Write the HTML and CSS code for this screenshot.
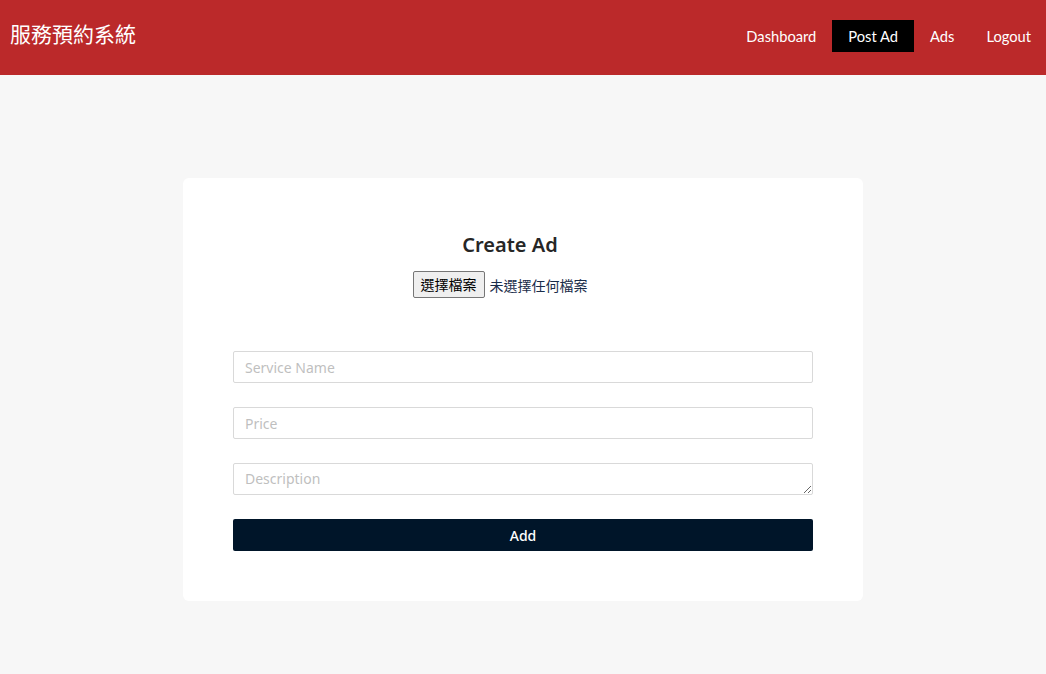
FILE: index.html
```html
<!DOCTYPE html>
<html lang="zh-Hant">
<head>
<meta charset="utf-8">
<title>服務預約系統</title>
<link rel="stylesheet" href="styles.css">
</head>
<body>
<header class="topbar">
  <div class="brand">服務預約系統</div>
  <nav class="nav">
    <a class="nav-item">Dashboard</a>
    <a class="nav-item active">Post Ad</a>
    <a class="nav-item">Ads</a>
    <a class="nav-item">Logout</a>
  </nav>
</header>
<main class="main">
  <section class="card">
    <div class="head">
      <h2 class="title">Create Ad</h2>
      <label class="file">
        <span class="file-btn">選擇檔案</span>
        <span class="file-name">未選擇任何檔案</span>
      </label>
    </div>
    <form class="form">
      <input class="field" type="text" placeholder="Service Name">
      <input class="field" type="text" placeholder="Price">
      <textarea class="field area" placeholder="Description"></textarea>
      <button class="submit" type="button">Add</button>
    </form>
  </section>
</main>
</body>
</html>
```
FILE: styles.css
```css
* { box-sizing: border-box; }
html, body { margin: 0; padding: 0; }
body {
  background: #f7f7f7;
  font-family: "Noto Sans", "Open Sans", "Noto Sans CJK TC", sans-serif;
  color: #262626;
  min-height: 674px;
}
.topbar {
  height: 75px;
  background: #bb292a;
  display: flex;
  align-items: flex-start;
  justify-content: space-between;
  padding: 0 0 0 10px;
}
.brand {
  color: #fff;
  font-family: "Noto Sans CJK TC", sans-serif;
  font-size: 21px;
  line-height: 24px;
  margin-top: 21px;
}
.nav {
  display: flex;
  margin-top: 20px;
  margin-right: -1px;
}
.nav-item {
  color: #fff;
  font-family: "Lato", sans-serif;
  font-size: 14.7px;
  height: 32px;
  line-height: 33px;
  padding: 0 16px;
  cursor: pointer;
}
.nav-item.active { background: #000; }
.main {
  display: flex;
  justify-content: center;
  padding-top: 103px;
}
.card {
  width: 680px;
  background: #fff;
  border-radius: 6px;
  padding: 50px 50px 50px;
}
.head {
  display: flex;
  flex-direction: column;
  align-items: center;
}
.title {
  margin: 4px 26px 0 0;
  font-size: 20px;
  font-weight: 600;
  line-height: 26px;
  color: #262626;
}
.file {
  display: flex;
  align-items: center;
  gap: 5px;
  margin: 13px 46px 0 0;
  font-family: "Noto Sans CJK TC", sans-serif;
  font-size: 14px;
}
.file-btn {
  display: inline-block;
  height: 27px;
  line-height: 25px;
  padding: 0 7px;
  border: 1px solid #767676;
  border-radius: 2px;
  background: #efefef;
  color: #000;
}
.file-name { color: #1a2d4a; }
.form {
  display: flex;
  flex-direction: column;
  gap: 24px;
  margin-top: 53px;
}
.field {
  display: block;
  width: 100%;
  height: 32px;
  border: 1px solid #d9d9d9;
  border-radius: 2px;
  padding: 4px 11px;
  font-family: inherit;
  font-size: 14px;
  color: #262626;
  background: #fff;
  outline: none;
}
.field::placeholder { color: #bfbfbf; }
.area { resize: vertical; line-height: 22px; }
.submit {
  height: 32px;
  border: 0;
  border-radius: 2px;
  background: #001529;
  color: #fff;
  font-family: inherit;
  font-size: 14px;
  font-weight: 500;
  cursor: pointer;
}
```
